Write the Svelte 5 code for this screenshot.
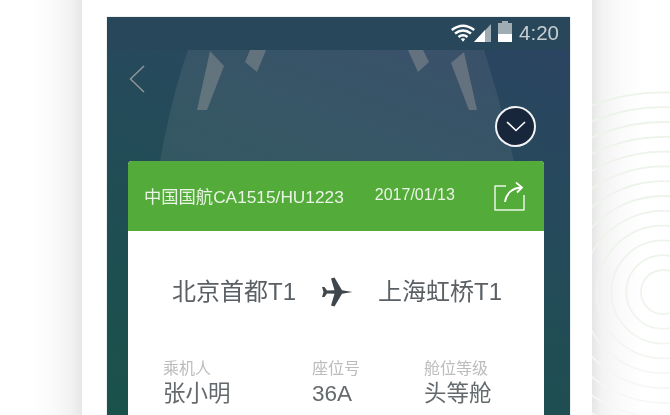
<script>
  const rings = Array.from({ length: 13 }, (_, i) => 22 + i * 14.8);
  const details = [
    { label: '乘机人', value: '张小明' },
    { label: '座位号', value: '36A' },
    { label: '舱位等级', value: '头等舱' }
  ];
</script>

<div class="page">
  <div class="side left"></div>
  <div class="phone">
    <div class="screen">
      <svg class="cabin" width="463" height="144" viewBox="107 17 463 144" aria-hidden="true">
        <path d="M188 50 H484 Q500 100 514 161 H160 Q172 95 188 50Z" fill="#ffe6e6" fill-opacity=".08" />
        <g fill="#9a9a9a" fill-opacity=".44">
          <polygon points="210,51 224,66 207,110 197,110" />
          <polygon points="250,50 266,50 257,72 245,62" />
          <polygon points="408,50 423,50 429,62 418,72" />
          <polygon points="464,52 451,63 469,110 477,110" />
        </g>
      </svg>

      <div class="status">
        <svg width="24" height="18" viewBox="0 0 24 18" class="wifi" aria-hidden="true">
          <g fill="none" stroke="#fff" stroke-width="2.500">
            <path d="M.8 6 Q12 -2.500 23.200 6" />
            <path d="M4 9.500 Q12 3.500 20 9.500" />
            <path d="M7.500 13 Q12 9.500 16.500 13" />
          </g>
          <path d="M9.800 15 Q12 13.500 14.200 15 L12 17.800Z" fill="#fff" />
        </svg>
        <svg width="17" height="18" viewBox="0 0 17 18" class="signal" aria-hidden="true">
          <polygon points="17,0 17,18 0,18" fill="#fff" fill-opacity=".55" />
          <polygon points="11,6 11,18 0,18" fill="#fff" />
        </svg>
        <svg width="14" height="21" viewBox="0 0 14 21" class="battery" aria-hidden="true">
          <path d="M4 0h6v2h4v11H0V2h4z" fill="#fff" fill-opacity=".55" />
          <rect y="13" width="14" height="8" fill="#fff" />
        </svg>
        <span class="time">4:20</span>
      </div>

      <div class="main">
        <div class="top">
          <svg width="16" height="28" viewBox="0 0 16 28" class="back" aria-hidden="true">
            <path d="M15 1 L1.500 14 L15 27" fill="none" stroke="#8f9598" stroke-width="1.500" />
          </svg>
          <div class="collapse">
            <svg width="20" height="11" viewBox="0 0 20 11" aria-hidden="true">
              <path d="M1 1 L10 9.500 L19 1" fill="none" stroke="#fff" stroke-width="1.600" />
            </svg>
          </div>
        </div>

        <div class="card">
          <div class="head">
            <span class="flight">中国国航CA1515/HU1223</span>
            <span class="date">2017/01/13</span>
            <svg width="32" height="29" viewBox="0 0 32 29" class="share" aria-hidden="true">
              <path d="M12 4 H1 V28 H30 V13" fill="none" stroke="#eaf5e6" stroke-width="1.500" stroke-linejoin="round" />
              <path d="M11 20 C12 12 18 6 27 5.500" fill="none" stroke="#fff" stroke-width="1.800" />
              <path d="M22 .5 L28 5.500 L23 10.500" fill="none" stroke="#fff" stroke-width="1.800" />
            </svg>
          </div>
          <div class="route">
            <span>北京首都T1</span>
            <svg width="32" height="32" viewBox="0 0 32 32" class="plane" aria-hidden="true">
              <path fill="#40474c" d="M31.500 16 L21 14.300 L13.500 1.500 L10 2.500 L13.500 14.300 L6 14.500 L3.500 11 L1 11 L2.500 16 L1 21 L3.500 21 L6 17.500 L13.500 17.700 L10 29.500 L13.500 30.500 L21 17.700 Z" />
            </svg>
            <span>上海虹桥T1</span>
          </div>
          <div class="details">
            {#each details as item}
              <div class="item">
                <div class="label">{item.label}</div>
                <div class="value">{item.value}</div>
              </div>
            {/each}
          </div>
        </div>
      </div>
    </div>
  </div>
  <div class="side right">
    <svg width="78" height="415" viewBox="592 0 78 415" aria-hidden="true">
      <defs>
        <linearGradient id="fade" gradientUnits="userSpaceOnUse" x1="0" y1="90" x2="0" y2="415">
          <stop offset="0" stop-color="#ecf4ea" />
          <stop offset=".6" stop-color="#edf4eb" />
          <stop offset="1" stop-color="#f7f8f6" />
        </linearGradient>
      </defs>
      <g fill="none" stroke="url(#fade)" stroke-width="1.800">
        {#each rings as r}
          <circle cx="663" cy="292" {r} />
        {/each}
      </g>
    </svg>
  </div>
</div>

<style>
  :global(body) {
    margin: 0;
    background: #fff;
  }
  .page {
    display: flex;
    width: 670px;
    height: 415px;
    overflow: hidden;
    font-family: "Liberation Sans", "Noto Sans CJK SC", sans-serif;
  }
  .side {
    flex: none;
    height: 100%;
  }
  .left {
    width: 82px;
    background: linear-gradient(to right, #fff 30px, #fbfbfb 50px, #f3f3f3 70px, #e7e7e7 82px);
  }
  .right {
    width: 78px;
    background: linear-gradient(to right, #e6e6e6 0, #f3f3f3 10px, #fafafa 28px, #fff 50px);
  }
  .right svg {
    display: block;
  }
  .phone {
    flex: none;
    box-sizing: border-box;
    width: 510px;
    height: 100%;
    padding: 17px 22px 0 25px;
    background: #fff;
  }
  .screen {
    position: relative;
    display: flex;
    flex-direction: column;
    height: 100%;
    overflow: hidden;
    background: linear-gradient(200deg, #2c4262 0%, #264a5c 35%, #1d4f50 75%, #1b524b 100%);
    box-shadow: 0 0 1px #8fa3ad;
  }
  .cabin {
    position: absolute;
    left: 0;
    top: 0;
  }
  .status {
    position: relative;
    display: flex;
    flex: none;
    align-items: flex-end;
    box-sizing: border-box;
    height: 33px;
    padding: 0 11px 8px 0;
    justify-content: flex-end;
    background: #28475a;
  }
  .wifi {
    margin-right: -1px;
  }
  .signal {
    margin-right: 7px;
  }
  .battery {
    margin-right: 7px;
  }
  .time {
    font-size: 20.500px;
    line-height: 18px;
    color: #c6ced2;
    filter: blur(.3px);
  }
  .main {
    position: relative;
    display: flex;
    flex: 1;
    flex-direction: column;
    padding: 0 26px 0 21px;
  }
  .top {
    display: flex;
    flex: none;
    justify-content: space-between;
    height: 111px;
  }
  .back {
    margin: 15px 0 0 1px;
  }
  .collapse {
    display: flex;
    align-items: center;
    justify-content: center;
    box-sizing: border-box;
    width: 41px;
    height: 41px;
    margin: 56px 8px 0 0;
    border: 2px solid #f2f4f5;
    border-radius: 50%;
    background: #17263a;
  }
  .card {
    flex: 1;
    border-radius: 4px 4px 0 0;
    background: #fff;
    overflow: hidden;
  }
  .head {
    display: flex;
    align-items: center;
    height: 70px;
    padding: 0 18px 0 16px;
    color: #eaf4e6;
    background: #53ab3a;
  }
  .flight {
    margin-top: -2px;
    font-size: 17.300px;
    white-space: nowrap;
    filter: blur(.3px);
  }
  .date {
    margin-top: -2px;
    margin-left: 31px;
    font-size: 16px;
    filter: blur(.3px);
  }
  .share {
    margin-left: auto;
  }
  .route {
    display: flex;
    align-items: center;
    height: 32px;
    padding: 45px 0 0 44px;
    font-size: 24px;
    line-height: 32px;
    color: #5a6064;
    white-space: nowrap;
    filter: blur(.3px);
  }
  .plane {
    margin: 0 25px;
  }
  .details {
    display: grid;
    grid-template-columns: 149px 112px 1fr;
    padding: 50px 0 0 35px;
    filter: blur(.3px);
  }
  .label {
    font-size: 16px;
    line-height: 22px;
    color: #bcbcbc;
    white-space: nowrap;
  }
  .value {
    font-size: 22.500px;
    line-height: 28px;
    color: #63696c;
    white-space: nowrap;
  }
</style>
